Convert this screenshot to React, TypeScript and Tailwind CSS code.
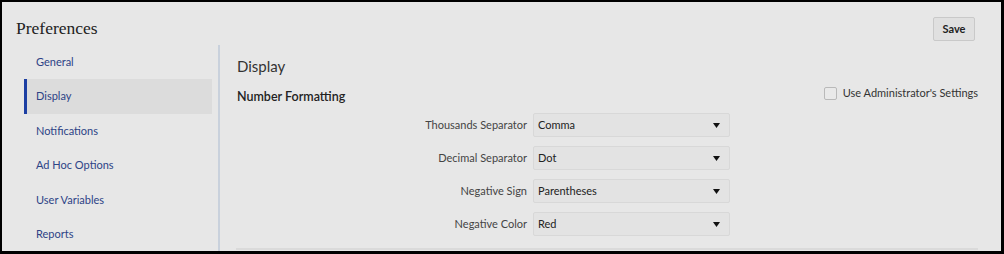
const NAV = ["General", "Display", "Notifications", "Ad Hoc Options", "User Variables", "Reports"];

const FIELDS = [
  { label: "Thousands Separator", value: "Comma" },
  { label: "Decimal Separator", value: "Dot" },
  { label: "Negative Sign", value: "Parentheses" },
  { label: "Negative Color", value: "Red" },
];

const sans = "font-['Lato','Noto_Sans',sans-serif]";

function Select({ value }: { value: string }) {
  return (
    <div className="w-[197px] h-[24px] bg-[#e3e3e3] border border-[#d8d8d8] rounded-[2px] flex items-center justify-between pl-[4px] pr-[9px]">
      <span className="text-[11px] text-[#222]">{value}</span>
      <svg width="7" height="5" viewBox="0 0 7 5">
        <polygon points="0,0 7,0 3.5,5" fill="#111" />
      </svg>
    </div>
  );
}

export default function App() {
  return (
    <div className={`w-[1004px] h-[254px] overflow-hidden bg-[#e7e7e7] border-t-2 border-l-2 border-r-[3px] border-b-[3px] border-black flex flex-col ${sans}`}>
      {/* header */}
      <div className="h-[43px] flex items-start justify-between pl-[14px] pr-[26px]">
        <h1 className="mt-[16px] text-[17.5px] leading-[20px] text-[#222] font-['Liberation_Serif',serif]">Preferences</h1>
        <button className="mt-[15px] w-[42px] h-[24px] bg-[#e0e0e0] border border-[#c9c9c9] rounded-[2px] text-[11px] font-bold text-[#222]">
          Save
        </button>
      </div>

      <div className="flex flex-1 min-h-0">
        {/* sidebar */}
        <nav className="w-[218px] border-r-[2px] border-[#c9d1dc] pl-[22px] pr-[6px]">
          {NAV.map((item) => {
            const active = item === "Display";
            return (
              <div
                key={item}
                className={`h-[34.4px] flex items-center text-[11px] text-[#2d4386] ${
                  active ? "bg-[#dcdcdc] border-l-[3px] border-[#1d3fa3] pl-[9px]" : "pl-[12px]"
                }`}
              >
                {item}
              </div>
            );
          })}
        </nav>

        {/* content */}
        <main className="flex-1 pl-[17px] pr-[23px] pt-[10px]">
          <h2 className="text-[15px] leading-[22px] text-[#333]">Display</h2>
          <div className="mt-[10px] flex items-center justify-between">
            <h3 className="text-[12.5px] leading-[20px] font-semibold text-[#222]">Number Formatting</h3>
            <label className="flex items-center gap-[6px] text-[11px] text-[#333] -mt-[7px]">
              <span className="w-[13px] h-[13px] border border-[#b9b9b9] rounded-[2px] bg-[#e9e9e9]" />
              Use Administrator's Settings
            </label>
          </div>
          <div className="mt-[6px] -ml-[2px] flex flex-col gap-[9px]">
            {FIELDS.map((f) => (
              <div key={f.label} className="flex items-center gap-[6px]">
                <span className="w-[292px] text-right text-[11px] text-[#444]">{f.label}</span>
                <Select value={f.value} />
              </div>
            ))}
          </div>
          <div className="mt-[12px] -ml-[1px] h-[2px] bg-[#dadada]" />
        </main>
      </div>
    </div>
  );
}
